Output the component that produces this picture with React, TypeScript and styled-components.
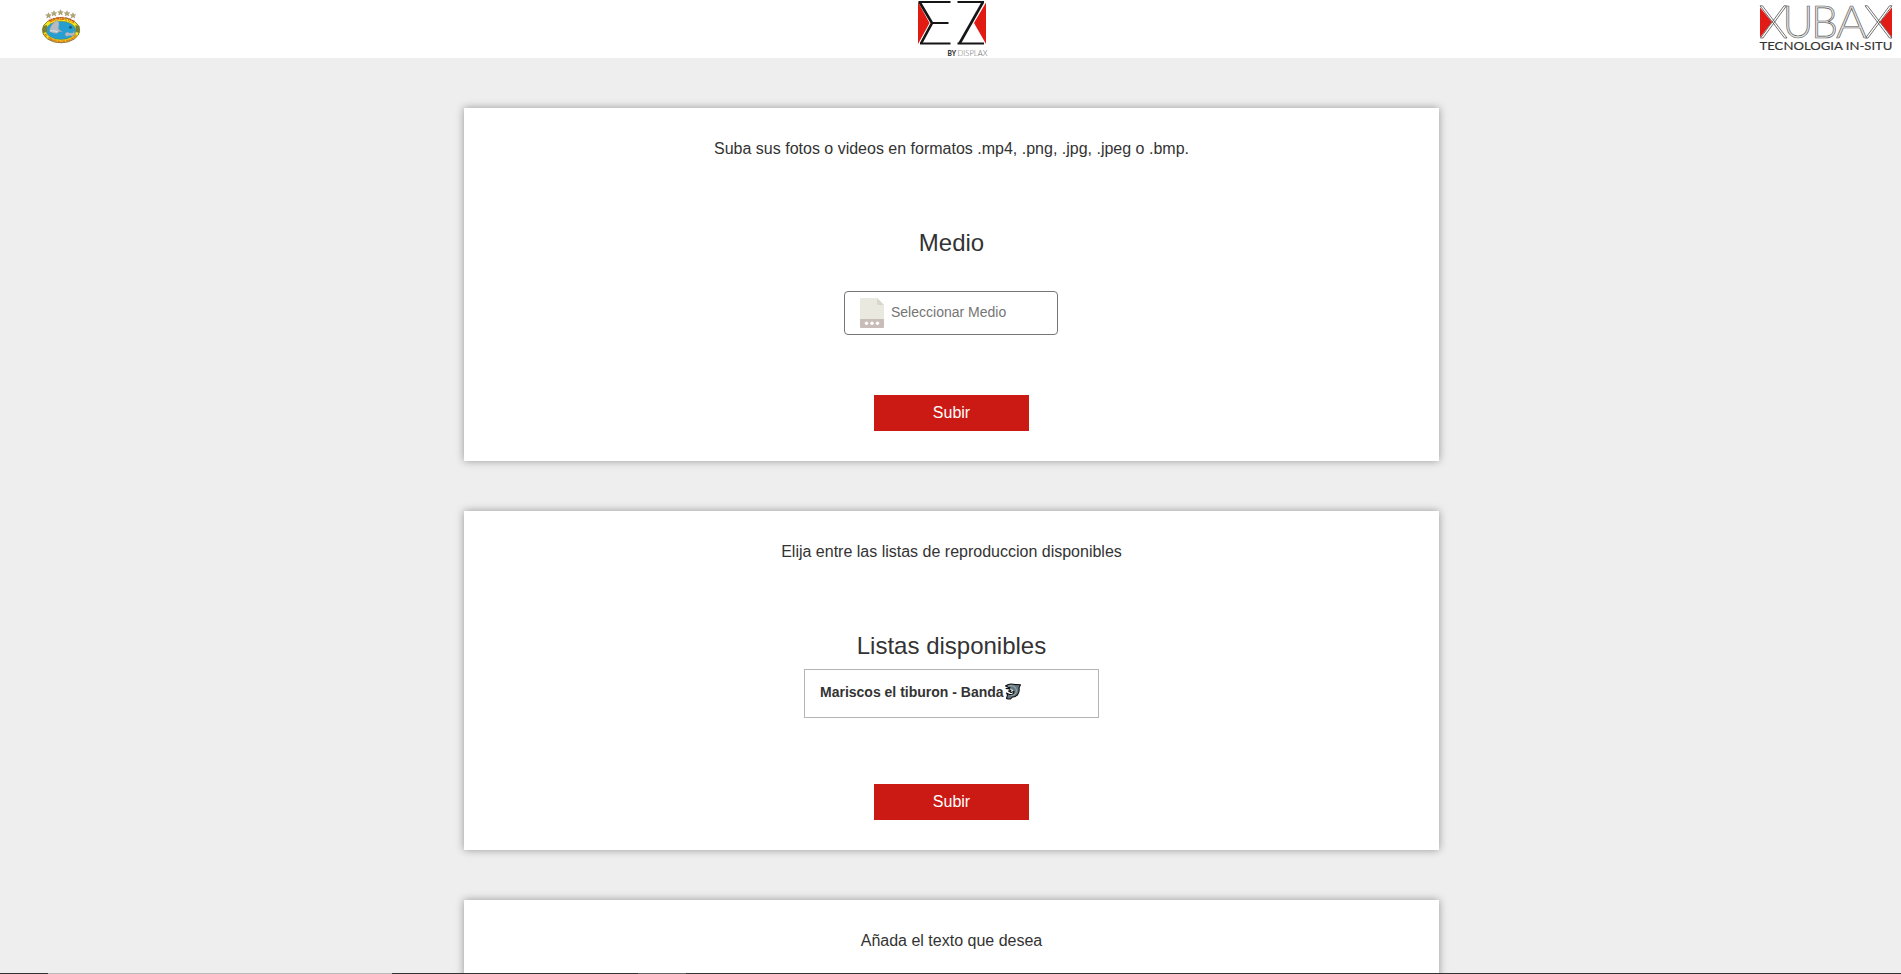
import React from "react";
import styled, { createGlobalStyle } from "styled-components";

const GlobalStyle = createGlobalStyle`
  *, *::before, *::after { box-sizing: border-box; }
  body {
    margin: 0;
    background: #eee;
    color: #333;
    font-family: "Liberation Sans", Arial, sans-serif;
    font-size: 16px;
    line-height: 24px;
  }
  h2, p { margin: 0; font-weight: 400; }
`;

const Page = styled.div`
  display: flex;
  flex-direction: column;
  height: 974px;
  overflow: hidden;
`;

const Header = styled.header`
  display: grid;
  grid-template-columns: 1fr 100px 1fr;
  flex: none;
  height: 58px;
  background: #fff;
`;

const Logo = styled.svg<{ $align?: string; $inset?: string }>`
  display: block;
  justify-self: ${(p) => p.$align ?? "center"};
  margin: ${(p) => p.$inset ?? "0"};
`;

const Main = styled.main`
  display: flex;
  flex: 1;
  min-height: 0;
  flex-direction: column;
  align-items: center;
  gap: 50px;
  padding: 50px 0 0 2px;
  overflow: hidden;
`;

const Card = styled.section<{ $height: number }>`
  display: flex;
  flex: none;
  flex-direction: column;
  align-items: center;
  width: 975px;
  height: ${(p) => p.$height}px;
  padding: 29px 0 30px;
  background: #fff;
  box-shadow: 0 0 8px rgba(0, 0, 0, 0.37);
`;

const Title = styled.h2<{ $gap: number }>`
  margin: 64px 0 ${(p) => p.$gap}px;
  font-size: 24px;
  line-height: 36px;
`;

const FilePicker = styled.label`
  display: flex;
  align-items: center;
  gap: 7px;
  width: 214px;
  height: 44px;
  margin-right: 1px;
  padding: 0 15px;
  border: 1px solid #767676;
  border-radius: 4px;
  color: #757575;
  font-size: 14px;
`;

const PickerText = styled.span`
  padding-bottom: 2px;
`;

const PlayList = styled.div`
  display: flex;
  align-items: center;
  width: 295px;
  height: 49px;
  padding: 0 15px 3px;
  border: 1px solid #b5b5b5;
  font-size: 14px;
  font-weight: 700;
`;

const SubmitButton = styled.button`
  width: 155px;
  height: 36px;
  margin-top: auto;
  padding: 0;
  border: 0;
  background: #cb1a14;
  color: #fff;
  font: inherit;
`;

const BottomEdge = styled.div`
  display: flex;
  flex: none;
  height: 1px;
  background: #333;
`;

const EdgeSegment = styled.span<{ $width: number; $start: number; $color: string }>`
  width: ${(p) => p.$width}px;
  margin-left: ${(p) => p.$start}px;
  background: ${(p) => p.$color};
`;

const CrestLogo = () => (
  <Logo $align="start" $inset="0 0 0 36px" width="50" height="58" viewBox="36 0 50 58">
    <defs>
      <path id="crest-top" d="M46 27A15.5 9.5 0 0 1 76 27" />
      <path id="crest-bottom" d="M43.500 31A17.5 11.6 0 0 0 78.500 31" />
    </defs>
    {[
      [48.5, 15.5],
      [54, 13.5],
      [60.5, 12.5],
      [67, 13.5],
      [73, 15.5],
    ].map(([x, y]) => (
      <path
        key={x}
        transform={`translate(${x} ${y})`}
        d="M0-2.8L.8-.8 2.8-.8 1.2.5 1.8 2.5 0 1.3-1.8 2.5-1.2.5-2.8-.8-.8-.8Z"
        fill="#b9a765"
        stroke="#756e51"
        strokeWidth=".35"
      />
    ))}
    <ellipse cx="61" cy="30.2" rx="18.7" ry="12.6" fill="#f4e51c" stroke="#5d6a35" strokeWidth=".8" />
    <ellipse cx="61" cy="30.4" rx="14.8" ry="9.2" fill="#259fd2" stroke="#68793b" strokeWidth=".5" />
    <path d="M43 26l4-1v7l-4 1zM75.500 25l4 1v7l-3.500-1z" fill="#7c8130" />
    <path
      d="M49.500 31c1-5 3-8 8-11l1 2c1 2 0 4 0 7l4 3-3-.5-3 2c-3-.5-5-.5-7-2.500zM65 34c1-2 3-2 4-1l4 0 1-2 .7 3-2.500 2-3-.5-3 1z"
      fill="#b6bac2"
      stroke="#8a99a8"
      strokeWidth=".4"
    />
    <path d="M50 31q4-1 8 1" fill="none" stroke="#e2e2e2" />
    <circle cx="70.500" cy="27.300" r="1.500" fill="#1b5975" />
    <text fontSize="4.500" fontWeight="700" fill="#df3b1c">
      <textPath href="#crest-top" startOffset="16%" textLength="25">MARISCOS</textPath>
    </text>
    <text fontSize="3.200" fontWeight="700" fill="#d6421c">
      <textPath href="#crest-bottom" startOffset="8%" textLength="38">EL TIBURON DE NAYARIT</textPath>
    </text>
  </Logo>
);

const EzLogo = () => (
  <Logo width="100" height="58" viewBox="1.500 0 100 58">
    <path d="M18.500 2L30 23 18.500 44zM86.500 2.500V44L74.500 23z" fill="#e11b12" />
    <g fill="none" stroke="#151515" strokeWidth="2">
      <path d="M19 2H51M32 23H49M20.500 43.500H51" />
      <path d="M20 2L32.500 23 21.500 43.500" strokeWidth="2.600" />
      <path d="M58 2H84.500M58 43.500H84.500" />
      <path d="M83.500 2L60 43.500" strokeWidth="2.600" />
    </g>
    <text x="48" y="55.800" fontFamily="Lato, sans-serif" fontSize="6.600" fontWeight="900" fill="#333" textLength="8.500">
      BY
    </text>
    <text x="58" y="55.800" fontFamily="Lato, sans-serif" fontSize="7.600" fontWeight="300" fill="#666" textLength="30">
      DISPLAX
    </text>
  </Logo>
);

const XubaxLogo = () => (
  <Logo $align="end" $inset="0 6px 0 0" width="139" height="58" viewBox="1756 0 139 58">
    <path d="M1760 7.500L1772 22 1760 37.500zM1892 7.500V37.500L1880 22z" fill="#e11b16" />
    <g fill="none" stroke="#505050" strokeWidth=".8">
      <path d="M1760 5.800H1762.500L1787 38H1784.500ZM1784 5.800H1786.500L1763 38H1760.500Z" />
      <path d="M1865 5.800H1867.500L1892 38H1889.500ZM1889.500 5.800H1892L1868 38H1865.500Z" />
    </g>
    <g
      fontFamily="Lato, sans-serif"
      fontSize="44.500"
      fontWeight="300"
      fill="#e4e4e4"
      stroke="#555"
      strokeWidth=".65"
    >
      <text x="1782.500" y="38" textLength="31" lengthAdjust="spacingAndGlyphs">U</text>
      <text x="1811" y="38" textLength="27" lengthAdjust="spacingAndGlyphs">B</text>
      <text x="1836" y="38" textLength="31" lengthAdjust="spacingAndGlyphs">A</text>
    </g>
    <text
      x="1759.500"
      y="50"
      fontFamily="Lato, sans-serif"
      fontSize="12"
      fill="#333"
      stroke="#333"
      strokeWidth=".15"
      textLength="133"
      lengthAdjust="spacingAndGlyphs"
    >
      TECNOLOGIA IN-SITU
    </text>
  </Logo>
);

const FileIcon = () => (
  <svg width="24" height="30" viewBox="0 0 24 30">
    <path d="M1 0h16l7 7v14H0V1a1 1 0 0 1 1-1z" fill="#e9e9e0" />
    <path d="M17 0v6a1 1 0 0 0 1 1h6z" fill="#d9d7ca" />
    <path d="M0 21h24v8a1 1 0 0 1-1 1H1a1 1 0 0 1-1-1z" fill="#c8bdb8" />
    <g fill="#fff">
      <circle cx="6.500" cy="25.200" r="1.700" />
      <circle cx="12" cy="25.200" r="1.700" />
      <circle cx="17.500" cy="25.200" r="1.700" />
    </g>
  </svg>
);

const SharkIcon = () => (
  <svg width="18" height="18" viewBox="0 0 18 18">
    <path
      d="M1.500 3C4 1 8 .7 11 1.500l5.500.3-1.500 3c1 5-2 9.500-7 9.500L6.500 16H4l-1.500-.5 1-3.500L2.500 10l3 1.500c3 .5 4.500-1 4.500-3L7 9.500 4.500 8 7 7.500 5.500 6 2 5.500l4-.8z"
      fill="#647680"
      stroke="#111"
      strokeWidth="1.100"
      strokeLinejoin="round"
    />
    <path d="M4 3.200c4-1.500 8 .3 8.500 4.300-.3 3-2.500 5-6 5" fill="none" stroke="#93a3aa" strokeWidth="1.100" />
    <path d="M6 6l3 1.500-2 .8" fill="none" stroke="#fff" strokeWidth=".8" />
  </svg>
);

export default function App() {
  return (
    <>
      <GlobalStyle />
      <Page>
        <Header>
          <CrestLogo />
          <EzLogo />
          <XubaxLogo />
        </Header>
        <Main>
          <Card $height={353}>
            <p>Suba sus fotos o videos en formatos .mp4, .png, .jpg, .jpeg o .bmp.</p>
            <Title $gap={30}>Medio</Title>
            <FilePicker>
              <FileIcon />
              <PickerText>Seleccionar Medio</PickerText>
            </FilePicker>
            <SubmitButton>Subir</SubmitButton>
          </Card>
          <Card $height={339}>
            <p>Elija entre las listas de reproduccion disponibles</p>
            <Title $gap={5}>Listas disponibles</Title>
            <PlayList>
              Mariscos el tiburon - Banda
              <SharkIcon />
            </PlayList>
            <SubmitButton>Subir</SubmitButton>
          </Card>
          <Card $height={339}>
            <p>Añada el texto que desea</p>
          </Card>
        </Main>
        <BottomEdge>
          <EdgeSegment $start={48} $width={344} $color="#bbb" />
          <EdgeSegment $start={246} $width={48} $color="#666" />
        </BottomEdge>
      </Page>
    </>
  );
}
